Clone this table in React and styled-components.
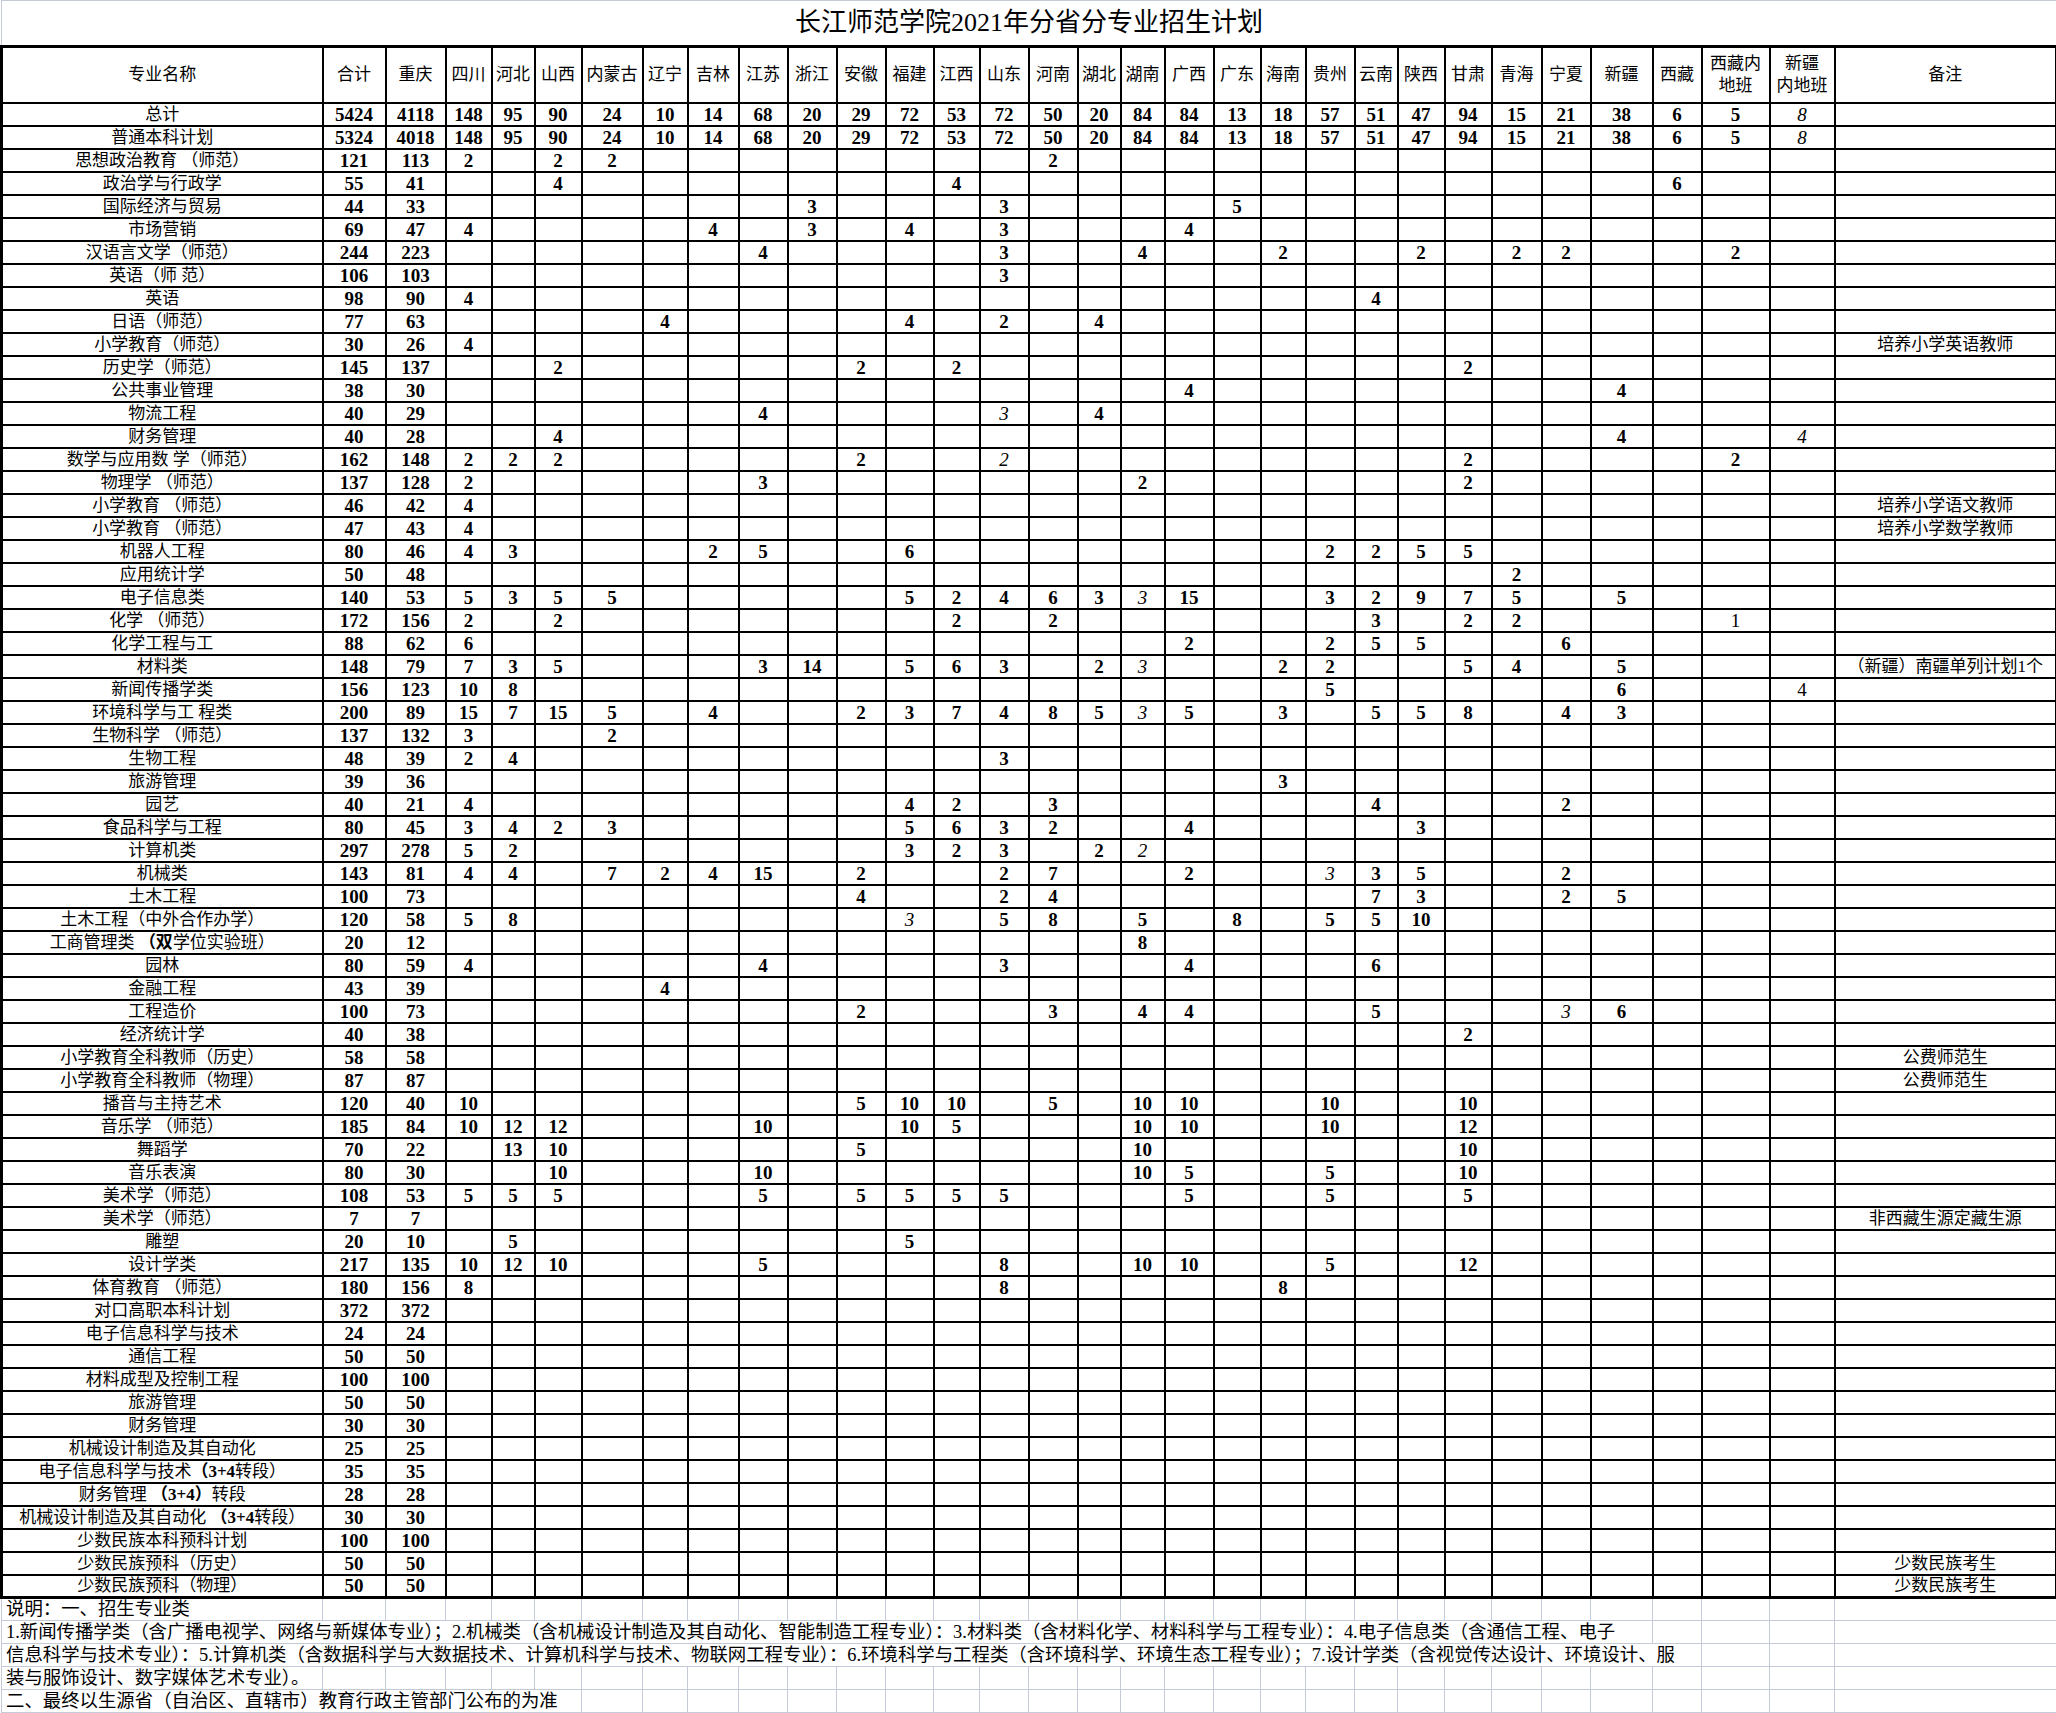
import React from 'react';
import styled, { createGlobalStyle, css } from 'styled-components';

const GlobalStyle = createGlobalStyle`
  html, body {
    margin: 0;
    padding: 0;
    background: #fff;
  }
  body {
    font-family: "Liberation Serif", "Noto Sans CJK SC", serif;
    color: #000;
  }
`;

const GRID = '#c5cad8';

const PROVINCES = [
  '四川', '河北', '山西', '内蒙古', '辽宁', '吉林', '江苏', '浙江', '安徽', '福建',
  '江西', '山东', '河南', '湖北', '湖南', '广西', '广东', '海南', '贵州', '云南',
  '陕西', '甘肃', '青海', '宁夏', '新疆', '西藏', '西藏内地班', '新疆内地班',
];

const HEAD_LABELS = {
  西藏内地班: ['西藏内', '地班'],
  新疆内地班: ['新疆', '内地班'],
};

// column widths measured off the sheet
const WIDTHS = [
  321, 63, 60, 46, 43, 47, 61, 45, 51, 49, 49, 49, 48, 46, 49, 49, 43, 44, 49,
  47, 45, 49, 43, 47, 47, 50, 49, 62, 49, 68, 65, 222,
];

const ALL = {
  四川: 148, 河北: 95, 山西: 90, 内蒙古: 24, 辽宁: 10, 吉林: 14, 江苏: 68, 浙江: 20,
  安徽: 29, 福建: 72, 江西: 53, 山东: 72, 河南: 50, 湖北: 20, 湖南: 84, 广西: 84,
  广东: 13, 海南: 18, 贵州: 57, 云南: 51, 陕西: 47, 甘肃: 94, 青海: 15, 宁夏: 21,
  新疆: 38, 西藏: 6, 西藏内地班: 5, 新疆内地班: '8*',
};

// '*' = italic, '~' = regular weight, [..] in a name = bold part
const ROWS = [
  ['总计', 5424, 4118, ALL],
  ['普通本科计划', 5324, 4018, ALL],
  ['思想政治教育 （师范）', 121, 113, { 四川: 2, 山西: 2, 内蒙古: 2, 河南: 2 }],
  ['政治学与行政学', 55, 41, { 山西: 4, 江西: 4, 西藏: 6 }],
  ['国际经济与贸易', 44, 33, { 浙江: 3, 山东: 3, 广东: 5 }],
  ['市场营销', 69, 47, { 四川: 4, 吉林: 4, 浙江: 3, 福建: 4, 山东: 3, 广西: 4 }],
  ['汉语言文学（师范）', 244, 223, { 江苏: 4, 山东: 3, 湖南: 4, 海南: 2, 陕西: 2, 青海: 2, 宁夏: 2, 西藏内地班: 2 }],
  ['英语（师 范）', 106, 103, { 山东: 3 }],
  ['英语', 98, 90, { 四川: 4, 云南: 4 }],
  ['日语（师范）', 77, 63, { 辽宁: 4, 福建: 4, 山东: 2, 湖北: 4 }],
  ['小学教育（师范）', 30, 26, { 四川: 4 }, '培养小学英语教师'],
  ['历史学（师范）', 145, 137, { 山西: 2, 安徽: 2, 江西: 2, 甘肃: 2 }],
  ['公共事业管理', 38, 30, { 广西: 4, 新疆: 4 }],
  ['物流工程', 40, 29, { 江苏: 4, 山东: '3*', 湖北: 4 }],
  ['财务管理', 40, 28, { 山西: 4, 新疆: 4, 新疆内地班: '4*' }],
  ['数学与应用数 学（师范）', 162, 148, { 四川: 2, 河北: 2, 山西: 2, 安徽: 2, 山东: '2*', 甘肃: 2, 西藏内地班: 2 }],
  ['物理学 （师范）', 137, 128, { 四川: 2, 江苏: 3, 湖南: 2, 甘肃: 2 }],
  ['小学教育 （师范）', 46, 42, { 四川: 4 }, '培养小学语文教师'],
  ['小学教育 （师范）', 47, 43, { 四川: 4 }, '培养小学数学教师'],
  ['机器人工程', 80, 46, { 四川: 4, 河北: 3, 吉林: 2, 江苏: 5, 福建: 6, 贵州: 2, 云南: 2, 陕西: 5, 甘肃: 5 }],
  ['应用统计学', 50, 48, { 青海: 2 }],
  ['电子信息类', 140, 53, {
    四川: 5, 河北: 3, 山西: 5, 内蒙古: 5, 福建: 5, 江西: 2, 山东: 4, 河南: 6, 湖北: 3,
    湖南: '3*', 广西: 15, 贵州: 3, 云南: 2, 陕西: 9, 甘肃: 7, 青海: 5, 新疆: 5,
  }],
  ['化学 （师范）', 172, 156, { 四川: 2, 山西: 2, 江西: 2, 河南: 2, 云南: 3, 甘肃: 2, 青海: 2, 西藏内地班: '1~' }],
  ['化学工程与工', 88, 62, { 四川: 6, 广西: 2, 贵州: 2, 云南: 5, 陕西: 5, 宁夏: 6 }],
  ['材料类', 148, 79, {
    四川: 7, 河北: 3, 山西: 5, 江苏: 3, 浙江: 14, 福建: 5, 江西: 6, 山东: 3, 湖北: 2,
    湖南: '3*', 海南: 2, 贵州: 2, 甘肃: 5, 青海: 4, 新疆: 5,
  }, '（新疆）南疆单列计划1个'],
  ['新闻传播学类', 156, 123, { 四川: 10, 河北: 8, 贵州: 5, 新疆: 6, 新疆内地班: '4~' }],
  ['环境科学与工 程类', 200, 89, {
    四川: 15, 河北: 7, 山西: 15, 内蒙古: 5, 吉林: 4, 安徽: 2, 福建: 3, 江西: 7, 山东: 4,
    河南: 8, 湖北: 5, 湖南: '3*', 广西: 5, 海南: 3, 云南: 5, 陕西: 5, 甘肃: 8, 宁夏: 4, 新疆: 3,
  }],
  ['生物科学 （师范）', 137, 132, { 四川: 3, 内蒙古: 2 }],
  ['生物工程', 48, 39, { 四川: 2, 河北: 4, 山东: 3 }],
  ['旅游管理', 39, 36, { 海南: 3 }],
  ['园艺', 40, 21, { 四川: 4, 福建: 4, 江西: 2, 河南: 3, 云南: 4, 宁夏: 2 }],
  ['食品科学与工程', 80, 45, { 四川: 3, 河北: 4, 山西: 2, 内蒙古: 3, 福建: 5, 江西: 6, 山东: 3, 河南: 2, 广西: 4, 陕西: 3 }],
  ['计算机类', 297, 278, { 四川: 5, 河北: 2, 福建: 3, 江西: 2, 山东: 3, 湖北: 2, 湖南: '2*' }],
  ['机械类', 143, 81, {
    四川: 4, 河北: 4, 内蒙古: 7, 辽宁: 2, 吉林: 4, 江苏: 15, 安徽: 2, 山东: 2, 河南: 7,
    广西: 2, 贵州: '3*', 云南: 3, 陕西: 5, 宁夏: 2,
  }],
  ['土木工程', 100, 73, { 安徽: 4, 山东: 2, 河南: 4, 云南: 7, 陕西: 3, 宁夏: 2, 新疆: 5 }],
  ['土木工程（中外合作办学）', 120, 58, { 四川: 5, 河北: 8, 福建: '3*', 山东: 5, 河南: 8, 湖南: 5, 广东: 8, 贵州: 5, 云南: 5, 陕西: 10 }],
  ['工商管理类 [（双]学位实验班）', 20, 12, { 湖南: 8 }],
  ['园林', 80, 59, { 四川: 4, 江苏: 4, 山东: 3, 广西: 4, 云南: 6 }],
  ['金融工程', 43, 39, { 辽宁: 4 }],
  ['工程造价', 100, 73, { 安徽: 2, 河南: 3, 湖南: 4, 广西: 4, 云南: 5, 宁夏: '3*', 新疆: 6 }],
  ['经济统计学', 40, 38, { 甘肃: 2 }],
  ['小学教育全科教师（历史）', 58, 58, {}, '公费师范生'],
  ['小学教育全科教师（物理）', 87, 87, {}, '公费师范生'],
  ['播音与主持艺术', 120, 40, { 四川: 10, 安徽: 5, 福建: 10, 江西: 10, 河南: 5, 湖南: 10, 广西: 10, 贵州: 10, 甘肃: 10 }],
  ['音乐学 （师范）', 185, 84, { 四川: 10, 河北: 12, 山西: 12, 江苏: 10, 福建: 10, 江西: 5, 湖南: 10, 广西: 10, 贵州: 10, 甘肃: 12 }],
  ['舞蹈学', 70, 22, { 河北: 13, 山西: 10, 安徽: 5, 湖南: 10, 甘肃: 10 }],
  ['音乐表演', 80, 30, { 山西: 10, 江苏: 10, 湖南: 10, 广西: 5, 贵州: 5, 甘肃: 10 }],
  ['美术学（师范）', 108, 53, { 四川: 5, 河北: 5, 山西: 5, 江苏: 5, 安徽: 5, 福建: 5, 江西: 5, 山东: 5, 广西: 5, 贵州: 5, 甘肃: 5 }],
  ['美术学（师范）', 7, 7, {}, '非西藏生源定藏生源'],
  ['雕塑', 20, 10, { 河北: 5, 福建: 5 }],
  ['设计学类', 217, 135, { 四川: 10, 河北: 12, 山西: 10, 江苏: 5, 山东: 8, 湖南: 10, 广西: 10, 贵州: 5, 甘肃: 12 }],
  ['体育教育 （师范）', 180, 156, { 四川: 8, 山东: 8, 海南: 8 }],
  ['对口高职本科计划', 372, 372, {}],
  ['电子信息科学与技术', 24, 24, {}],
  ['通信工程', 50, 50, {}],
  ['材料成型及控制工程', 100, 100, {}],
  ['旅游管理', 50, 50, {}],
  ['财务管理', 30, 30, {}],
  ['机械设计制造及其自动化', 25, 25, {}],
  ['电子信息科学与技术[（3+4]转段）', 35, 35, {}],
  ['财务管理 [（3+4）]转段', 28, 28, {}],
  ['机械设计制造及其自动化 [（3+4]转段）', 30, 30, {}],
  ['少数民族本科预科计划', 100, 100, {}],
  ['少数民族预科（历史）', 50, 50, {}, '少数民族考生'],
  ['少数民族预科（物理）', 50, 50, {}, '少数民族考生'],
];

const NOTES = [
  { text: '说明：一、招生专业类', span: 1 },
  { text: '1.新闻传播学类（含广播电视学、网络与新媒体专业）；2.机械类（含机械设计制造及其自动化、智能制造工程专业）：3.材料类（含材料化学、材料科学与工程专业）：4.电子信息类（含通信工程、电子', span: 28 },
  { text: '信息科学与技术专业）：5.计算机类（含数据科学与大数据技术、计算机科学与技术、物联网工程专业）：6.环境科学与工程类（含环境科学、环境生态工程专业）；7.设计学类（含视觉传达设计、环境设计、服', span: 29 },
  { text: '装与服饰设计、数字媒体艺术专业）。', span: 1 },
  { text: '二、最终以生源省（自治区、直辖市）教育行政主管部门公布的为准', span: 6 },
];

const Page = styled.div`
  width: 2056px;
  background: #fff;
`;

const Sheet = styled.table`
  border-collapse: collapse;
  table-layout: fixed;
  width: 2055px;
`;

const Col = styled.col`
  width: ${(p) => p.$w}px;
`;

const TitleRow = styled.tr`
  height: 46px;
`;

const TitleCell = styled.td`
  padding: 0;
  border: 1px solid ${GRID};
  border-bottom: 3px solid #000;
  text-align: center;
  vertical-align: middle;
  font-size: 26px;
  font-weight: 400;
  line-height: 1;
`;

const HeadRow = styled.tr`
  height: 56px;
`;

const HeadCell = styled.th`
  padding: 0;
  border: 2px solid #000;
  border-top-width: 3px;
  text-align: center;
  vertical-align: middle;
  font-size: 17px;
  font-weight: 400;
  line-height: 22px;
  white-space: nowrap;

  &:first-child {
    border-left-width: 3px;
  }
  &:last-child {
    border-right-width: 3px;
  }
`;

const DataBody = styled.tbody`
  tr:last-child > td {
    border-bottom-width: 3px;
  }
`;

const DataRow = styled.tr`
  height: 23px;
`;

const cellBase = css`
  padding: 0;
  border: 2px solid #000;
  text-align: center;
  vertical-align: middle;
  line-height: 1;
  white-space: nowrap;
  overflow: visible;
`;

const NameCell = styled.td`
  ${cellBase}
  border-left-width: 3px;
  font-size: 17px;
`;

const Strong = styled.b`
  font-weight: 700;
`;

const NumCell = styled.td`
  ${cellBase}
  font-size: 19px;
  font-weight: ${(p) => (p.$italic || p.$light ? 400 : 700)};
  font-style: ${(p) => (p.$italic ? 'italic' : 'normal')};
`;

const RemarkCell = styled.td`
  ${cellBase}
  border-right-width: 3px;
  font-size: 17px;
`;

const NoteRow = styled.tr`
  height: 23px;
`;

const NoteCell = styled.td`
  padding: 0 0 0 4px;
  border: 1px solid ${GRID};
  text-align: left;
  vertical-align: middle;
  font-size: 18.4px;
  line-height: 1;
  white-space: nowrap;
  overflow: visible;
`;

const GridCell = styled.td`
  padding: 0;
  border: 1px solid ${GRID};
`;

const renderName = (name) =>
  name.split(/[[\]]/).map((part, i) => (i % 2 ? <Strong key={i}>{part}</Strong> : part));

const Num = ({ value }) => {
  if (value === undefined) return <NumCell />;
  const text = String(value);
  return (
    <NumCell $italic={text.endsWith('*')} $light={text.endsWith('~')}>
      {text.replace(/[*~]/, '')}
    </NumCell>
  );
};

const HeadLabel = ({ label }) => {
  const lines = HEAD_LABELS[label];
  if (!lines) return label;
  return (
    <>
      {lines[0]}
      <br />
      {lines[1]}
    </>
  );
};

const App = () => {
  const total = WIDTHS.length;
  return (
    <Page>
      <GlobalStyle />
      <Sheet>
        <colgroup>
          {WIDTHS.map((w, i) => (
            <Col key={i} $w={w} />
          ))}
        </colgroup>
        <thead>
          <TitleRow>
            <TitleCell colSpan={total}>长江师范学院2021年分省分专业招生计划</TitleCell>
          </TitleRow>
          <HeadRow>
            <HeadCell>专业名称</HeadCell>
            <HeadCell>合计</HeadCell>
            <HeadCell>重庆</HeadCell>
            {PROVINCES.map((p) => (
              <HeadCell key={p}>
                <HeadLabel label={p} />
              </HeadCell>
            ))}
            <HeadCell>备注</HeadCell>
          </HeadRow>
        </thead>
        <DataBody>
          {ROWS.map(([name, sum, cq, cells, note], i) => (
            <DataRow key={i}>
              <NameCell>{renderName(name)}</NameCell>
              <Num value={sum} />
              <Num value={cq} />
              {PROVINCES.map((p) => (
                <Num key={p} value={cells[p]} />
              ))}
              <RemarkCell>{note}</RemarkCell>
            </DataRow>
          ))}
        </DataBody>
        <tbody>
          {NOTES.map((n, i) => (
            <NoteRow key={i}>
              <NoteCell colSpan={n.span}>{n.text}</NoteCell>
              {Array.from({ length: total - n.span }, (_, j) => (
                <GridCell key={j} />
              ))}
            </NoteRow>
          ))}
        </tbody>
      </Sheet>
    </Page>
  );
};

export default App;
